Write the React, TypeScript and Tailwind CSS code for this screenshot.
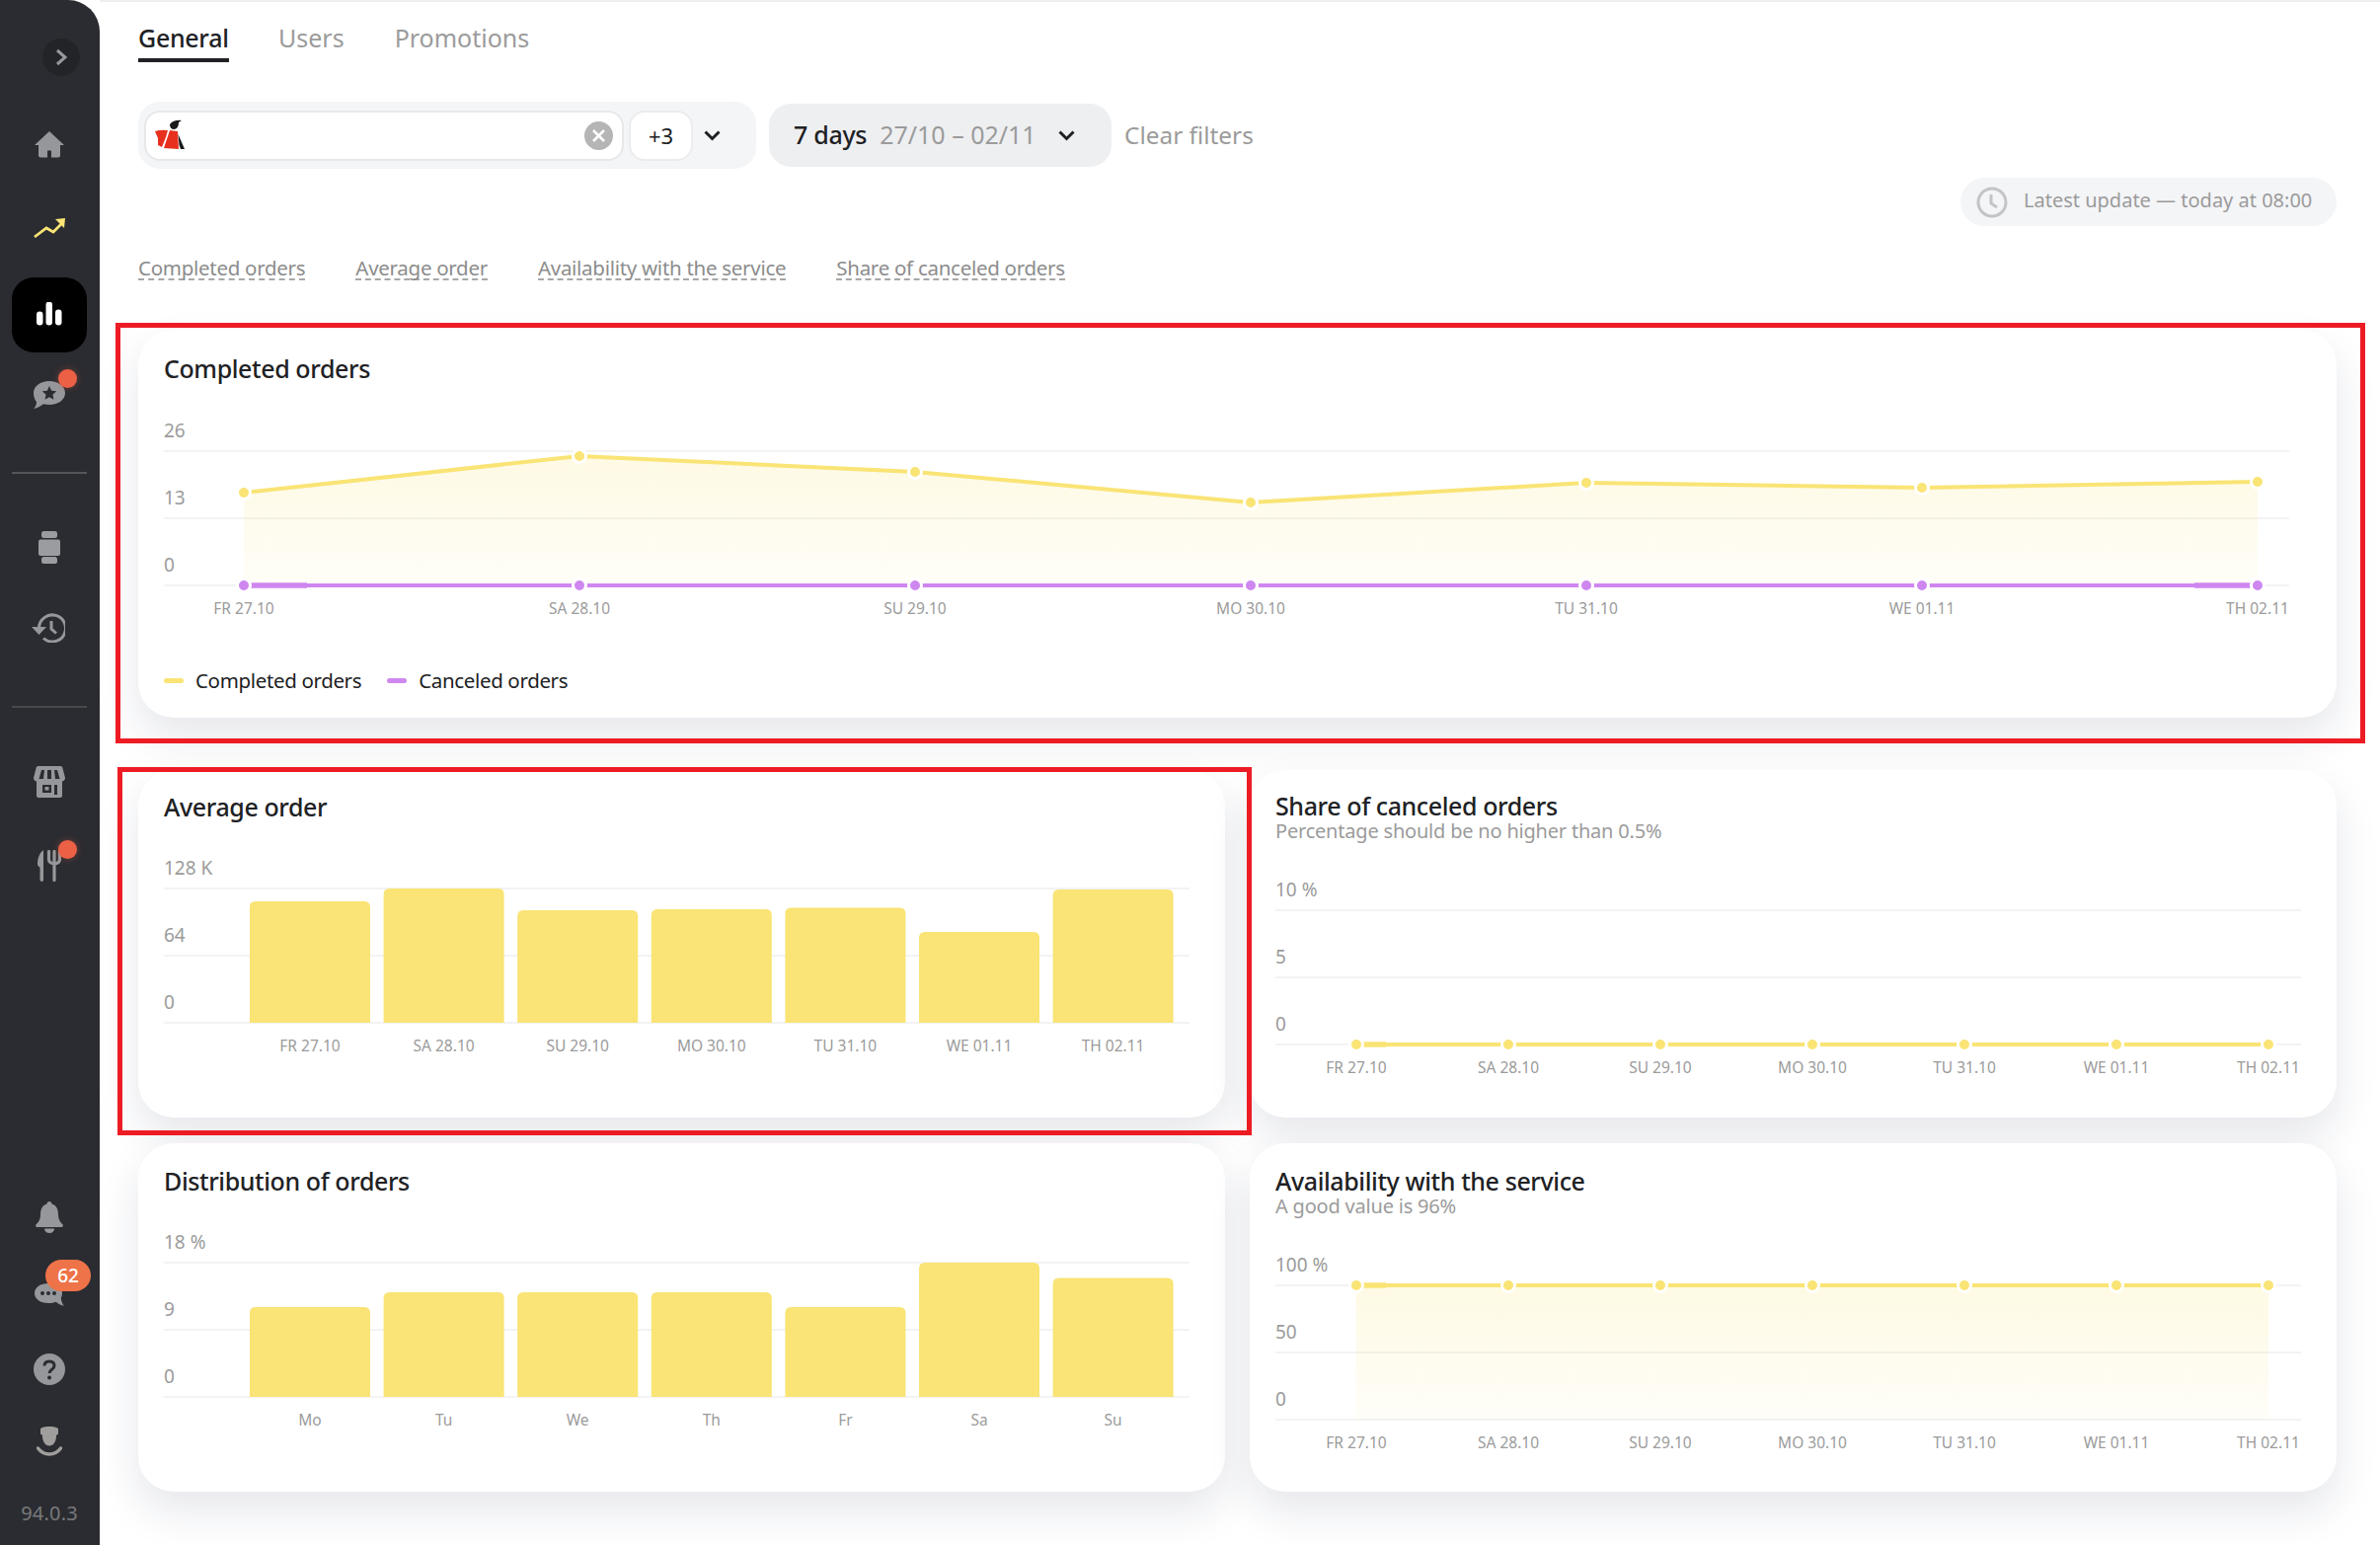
import React from "react";

const DAYS = ["FR 27.10", "SA 28.10", "SU 29.10", "MO 30.10", "TU 31.10", "WE 01.11", "TH 02.11"];
const WEEK = ["Mo", "Tu", "We", "Th", "Fr", "Sa", "Su"];
const YEL = "#f9e475";
const PUR = "#cf87f0";
const GRID = [68, 136, 204];

function Axis({ labels, w }: { labels: string[]; w: number }) {
  return (
    <>
      {GRID.map((y) => (
        <line key={y} x1={0} x2={w} y1={y} y2={y} stroke="#f3f3f4" strokeWidth={2} />
      ))}
      {labels.map((t, i) => (
        <text key={t} x={0} y={GRID[i] - 21} fontSize={19} dominantBaseline="central" className="fill-[#9b9b9b]">
          {t}
        </text>
      ))}
    </>
  );
}

function XLabels({ items, xs, y = 227 }: { items: string[]; xs: number[]; y?: number }) {
  return (
    <>
      {items.map((t, i) => (
        <text key={t} x={xs[i]} y={y} fontSize={15.5} textAnchor="middle" dominantBaseline="central" className="fill-[#9b9b9b]">
          {t}
        </text>
      ))}
    </>
  );
}

function Series({ xs, ys, color, thick, thickEnd = 0 }: { xs: number[]; ys: number[]; color: string; thick: number; thickEnd?: number }) {
  const pts = xs.map((x, i) => `${x},${ys[i]}`).join(" ");
  const n = xs.length - 1;
  const dy0 = (ys[1] - ys[0]) / (xs[1] - xs[0]);
  const dy1 = (ys[n] - ys[n - 1]) / (xs[n] - xs[n - 1]);
  return (
    <>
      <polyline points={pts} fill="none" stroke={color} strokeWidth={4} />
      {thick > 0 && <line x1={xs[0]} y1={ys[0]} x2={xs[0] + thick} y2={ys[0] + dy0 * thick} stroke={color} strokeWidth={5.5} />}
      {thickEnd > 0 && <line x1={xs[n] - thickEnd} y1={ys[n] - dy1 * thickEnd} x2={xs[n]} y2={ys[n]} stroke={color} strokeWidth={5.5} />}
      {xs.map((x, i) => (
        <circle key={x} cx={x} cy={ys[i]} r={6.5} fill={color} stroke="#fff" strokeWidth={3} />
      ))}
    </>
  );
}

function Area({ xs, ys, id }: { xs: number[]; ys: number[]; id: string }) {
  const d = `M${xs[0]},204 ` + xs.map((x, i) => `L${x},${ys[i]}`).join(" ") + ` L${xs[xs.length - 1]},204 Z`;
  return (
    <>
      <defs>
        <linearGradient id={id} x1="0" y1="0" x2="0" y2="1">
          <stop offset="0" stopColor={YEL} stopOpacity={0.2} />
          <stop offset="1" stopColor={YEL} stopOpacity={0.05} />
        </linearGradient>
      </defs>
      <path d={d} fill={`url(#${id})`} />
    </>
  );
}

function BarChart({ tops, items, labels }: { tops: number[]; items: string[]; labels: string[] }) {
  const xs = tops.map((_, i) => 87 + i * 135.6);
  return (
    <svg width={1048} height={240} className="block">
      <Axis labels={labels} w={1039} />
      {tops.map((t, i) => (
        <path
          key={i}
          d={`M${xs[i]},204 V${t + 6} Q${xs[i]},${t} ${xs[i] + 6},${t} H${xs[i] + 116} Q${xs[i] + 122},${t} ${xs[i] + 122},${t + 6} V204 Z`}
          fill="#f9e475"
        />
      ))}
      <XLabels items={items} xs={xs.map((x) => x + 61)} y={227} />
    </svg>
  );
}

function Title({ children, sub }: { children: React.ReactNode; sub?: string }) {
  return (
    <div className="flex flex-col">
      <div className={`${sub ? "h-[28px] leading-[28px]" : "h-[30px] leading-[30px]"} text-[25px] font-medium text-[#202124] tracking-[-0.4px] whitespace-nowrap`}>
        {children}
      </div>
      {sub && <div className="h-[24px] leading-[24px] text-[20px] text-[#9b9b9b] tracking-[-0.2px] whitespace-nowrap">{sub}</div>}
    </div>
  );
}

const I = "w-[40px] h-[40px] flex items-center justify-center relative shrink-0";
const G = "#96979a";

function Dot() {
  return <span className="absolute left-[29px] top-[-6px] w-[19px] h-[19px] rounded-full bg-[#ec6046] shadow-[0_0_6px_rgba(236,96,70,0.4)]" />;
}

function Sidebar() {
  return (
    <aside className="w-[101px] h-[1565px] shrink-0 rounded-tr-[32px] bg-[#2b2c31] flex flex-col items-center pr-[1px]">
      <button className="ml-[24px] mt-[39px] w-[38px] h-[38px] rounded-full bg-[#232427] flex items-center justify-center shrink-0">
        <svg width="16" height="20" viewBox="0 0 16 20" fill="none"><path d="M4 3l8 7-8 7" stroke="#97989b" strokeWidth="3" /></svg>
      </button>
      <div className={`${I} mt-[49px]`}>
        <svg width="30" height="28" viewBox="0 0 30 28"><path d="M15 1L0 15h4v10.500c0 1 1 2 2 2h7v-7h4v7h7c1 0 2-1 2-2V15h4z" fill={G} /></svg>
      </div>
      <div className={`${I} mt-[45px]`}>
        <svg width="32" height="22" viewBox="0 0 32 22" fill="none"><path d="M1 20L13 11l7 4L29 6" stroke="#f9e475" strokeWidth="2.800" /><path d="M22 2l10-1-1 10z" fill="#f9e475" /></svg>
      </div>
      <div className="mt-[30px] w-[76px] h-[76px] rounded-[22px] bg-black flex items-center justify-center shrink-0">
        <svg width="26" height="26" viewBox="0 0 26 26">
          <rect x="0" y="9.500" width="6.500" height="14" rx="3.200" fill="#fff" />
          <rect x="9.500" y="-0.500" width="6.500" height="24" rx="3.200" fill="#fff" />
          <rect x="19" y="7.500" width="6.500" height="16" rx="3.200" fill="#fff" />
        </svg>
      </div>
      <div className={`${I} mt-[23px]`}>
        <svg width="32" height="28" viewBox="0 0 32 28">
          <path d="M16 0c9 0 16 5 16 12s-7 12-16 12c-2 0-4-.2-6-.8C8 25 4 27 0 28c2-2 3-4 3-7C1 19 0 15.500 0 12 0 5 7 0 16 0z" fill={G} />
          <path d="M16 5l2.200 4.800 5 .5-3.800 3.400 1.100 5.100L16 16.200l-4.500 2.600 1.100-5.100-3.800-3.400 5-.5z" fill="#2b2c31" />
        </svg>
        <Dot />
      </div>
      <div className="mt-[58px] w-[76px] h-[2px] bg-[#55565a] shrink-0" />
      <div className={`${I} mt-[54px]`}>
        <svg width="22" height="33" viewBox="0 0 22 33">
          <rect x="3" y="0" width="16" height="7" rx="2.500" fill="#9b9c9f" />
          <rect x="0" y="8.500" width="22" height="16.500" rx="2" fill="#9b9c9f" />
          <rect x="3" y="26" width="16" height="7" rx="2.500" fill="#9b9c9f" />
        </svg>
      </div>
      <div className={`${I} mt-[42px]`}>
        <svg width="34" height="30" viewBox="0 0 34 30" fill="none" className="-ml-[3px]">
          <path d="M7.500 15A13.500 13.500 0 1 1 12 25.500" stroke={G} strokeWidth="3" />
          <path d="M0 14h15l-7.500 8z" fill={G} />
          <path d="M20 8v8l5 4.500" stroke={G} strokeWidth="3" />
        </svg>
      </div>
      <div className="mt-[59px] w-[76px] h-[2px] bg-[#48494d] shrink-0" />
      <div className={`${I} mt-[55px]`}>
        <svg width="32" height="32" viewBox="0 0 32 32">
          <path d="M5 0h22c1 0 2 .5 2.300 1.500L32 12c0 2-1 3-3 3.500V30c0 1-1 2-2 2H5c-1 0-2-1-2-2V15.500C1 15 0 14 0 12L2.700 1.500C3 .5 4 0 5 0z" fill={G} />
          <path d="M8 4h3l-1 9H5.500zM21 4h3l2.500 9H22zM14 4h4v9h-4z" fill="#2b2c31" />
          <path d="M9 19h9v8H9zM21 19h3v10h-3z" fill="#2b2c31" />
          <path d="M11.500 21h4v3.500h-4z" fill={G} />
        </svg>
      </div>
      <div className={`${I} mt-[45px]`}>
        <svg width="24" height="32" viewBox="0 0 24 32" fill="none">
          <path d="M6 0C2 3 0 8 0 14c0 2 1 3 2.500 3.500V30c0 1 1 2 2 2s1.500-1 1.500-2z" fill={G} />
          <path d="M11.500 1.500v8c0 3 2 4 5.500 4.500M22.500 1.500v8c0 3-2 4-5.500 4.500M17 1.500V30.500" stroke={G} strokeWidth="3.200" strokeLinecap="round" />
        </svg>
        <Dot />
      </div>
      <div className="flex-1" />
      <div className={I}>
        <svg width="28" height="32" viewBox="0 0 28 32">
          <path d="M14 0c1.500 0 2.500 1 2.500 2.500C22 4 23 9 23 14c0 4 2 7 5 10 0 1.500-1 2-2 2H2c-1 0-2-.5-2-2 3-3 5-6 5-10 0-5 1-10 6.500-11.500C11.500 1 12.500 0 14 0z" fill={G} />
          <path d="M9 27.500h10c0 2.500-2 4.500-5 4.500s-5-2-5-4.500z" fill={G} />
        </svg>
      </div>
      <div className={`${I} mt-[40px]`}>
        <svg width="30" height="26" viewBox="0 0 30 26">
          <path d="M14 0c8 0 14 4 14 10 0 1.800-.4 3.300-1.200 4.700.2 3 1 5 3 8-3.500-.5-6-2-8-3.900-2.300.8-5 1.200-7.800 1.200C6 20 0 16 0 10S6 0 14 0z" fill={G} />
          <circle cx="8" cy="10" r="2" fill="#2b2c31" />
          <circle cx="14" cy="10" r="2" fill="#2b2c31" />
          <circle cx="20" cy="10" r="2" fill="#2b2c31" />
        </svg>
        <span className="absolute left-[16px] top-[-17px] w-[46px] h-[32px] rounded-full bg-[#ee7348] flex items-center justify-center text-[19px] font-medium text-white">62</span>
      </div>
      <div className={`${I} mt-[34px]`}>
        <svg width="32" height="32" viewBox="0 0 32 32">
          <circle cx="16" cy="16" r="16" fill={G} />
          <path d="M11 12.500C11 9.500 13 8 16 8s5 1.700 5 4.500c0 4-5 3.500-5 7.500" fill="none" stroke="#2b2c31" strokeWidth="3" />
          <circle cx="16" cy="24.500" r="2" fill="#2b2c31" />
        </svg>
      </div>
      <div className={`${I} mt-[33px]`}>
        <svg width="26" height="30" viewBox="0 0 26 30" fill="none">
          <path d="M4 2.500c0-1 3-2.500 9-2.500s9 1.500 9 2.500v5c-1 .5-1.500 1-2 2 0 6-3 10-7 10s-7-4-7-10c-.5-1-1-1.500-2-2z" fill="#a09e9c" />
          <path d="M1.500 22c3 4 7 6 11.500 6s8.500-2 11.500-6" stroke="#a09e9c" strokeWidth="3.500" strokeLinecap="round" />
        </svg>
      </div>
      <div className="mt-[41px] mb-[20px] h-[24px] leading-[24px] text-[20px] text-[#78797c] tracking-[0.2px]">94.0.3</div>
    </aside>
  );
}

function Chev() {
  return (
    <svg width="17" height="11" viewBox="0 0 17 11" fill="none"><path d="M1.500 1.500l7 7 7-7" stroke="#1f2023" strokeWidth="3" /></svg>
  );
}

function Header() {
  return (
    <>
      <nav className="flex gap-[50px] h-[63px] shrink-0">
        <div className="w-[92px] h-[63px] border-b-[4px] border-[#202124] pt-[20px] text-[25px] leading-[36px] font-medium text-[#202124] tracking-[-0.3px] whitespace-nowrap">General</div>
        <div className="pt-[20px] text-[25px] leading-[36px] text-[#9b9b9b]">Users</div>
        <div className="pt-[20px] text-[25px] leading-[36px] text-[#9b9b9b] ml-[1px]">Promotions</div>
      </nav>
      <div className="flex items-center mt-[40px] h-[68px] shrink-0">
        <div className="w-[626px] h-[68px] rounded-[22px] bg-[#f4f5f7] flex items-center pl-[6px]">
          <div className="w-[486px] h-[51px] rounded-[16px] bg-white border-2 border-[#e8e8ea] flex items-center justify-between pl-[9px] pr-[9px]">
            <svg width="32" height="32" viewBox="0 0 32 32">
              <path d="M15 5Q19 0 27 1L24 3Q24 9 19.500 10 15 10 15 5z" fill="#1a1a1a" />
              <path d="M0 12Q6 10 13 11L11 18 7 28 3 26 3 19z" fill="#e8301f" />
              <path d="M15 11L23 12 24 30 9 29z" fill="#e8301f" />
              <path d="M23.500 15L30 30 26 30 24.500 26z" fill="#1a1a1a" />
            </svg>
            <svg width="29" height="29" viewBox="0 0 29 29">
              <circle cx="14.500" cy="14.500" r="14.500" fill="#b5b5b6" />
              <path d="M9 9l11 11M20 9L9 20" stroke="#fff" strokeWidth="2.500" />
            </svg>
          </div>
          <div className="ml-[5px] w-[65px] h-[51px] rounded-[16px] bg-white border-2 border-[#ececee] flex items-center justify-center text-[22px] text-[#202124]">+3</div>
          <div className="ml-[11px]"><Chev /></div>
        </div>
        <div className="ml-[13px] w-[347px] h-[64px] rounded-[22px] bg-[#eeeff1] flex items-center pl-[25px] text-[25px] whitespace-nowrap">
          <span className="font-medium text-[#202124] tracking-[-0.3px]">7 days</span>
          <span className="ml-[13px] text-[#9b9b9b]">27/10 – 02/11</span>
          <span className="ml-[22px]"><Chev /></span>
        </div>
        <span className="ml-[13px] text-[24.400px] text-[#9b9b9b] whitespace-nowrap">Clear filters</span>
      </div>
      <div className="self-end mt-[9px] w-[381px] h-[49px] rounded-full bg-[#f4f5f7] flex items-center shrink-0">
        <svg className="ml-[16px]" width="32" height="32" viewBox="0 0 32 32" fill="none">
          <circle cx="16" cy="16" r="14" stroke="#c4c4c6" strokeWidth="3" />
          <path d="M15 8v9l6 4" stroke="#c4c4c6" strokeWidth="3" />
        </svg>
        <span className="ml-[16px] pb-[3px] text-[20px] text-[#9b9b9b] whitespace-nowrap">Latest update — today at 08:00</span>
      </div>
      <div className="flex gap-[51px] mt-[31px] h-[24px] shrink-0">
        {["Completed orders", "Average order", "Availability with the service", "Share of canceled orders"].map((t) => (
          <span key={t} className="h-[24px] leading-[23px] border-b-2 border-dashed border-[#a8a8a8] text-[20.500px] text-[#8c8c8c] tracking-[-0.28px] whitespace-nowrap">{t}</span>
        ))}
      </div>
    </>
  );
}

const CARD = "rounded-[36px] bg-white shadow-[0_20px_44px_rgba(30,40,70,0.11)] px-[26px] overflow-hidden";

export default function App() {
  const x1 = DAYS.map((_, i) => 81 + i * 340);
  const x2 = DAYS.map((_, i) => 82 + i * 154);
  const y1 = [110, 73, 89, 120, 100, 105, 99];
  return (
    <div className="relative w-[2411px] h-[1565px] overflow-hidden bg-white flex font-['Noto_Sans',sans-serif]">
      <Sidebar />
      <main className="flex-1 min-w-0 flex flex-col pl-[39px] pr-[44px] border-t-2 border-[#eeeeee]">
        <div className="-mt-[2px] flex flex-col">
          <Header />
          <section className={`${CARD} mt-[50px] h-[393px] pt-[24px] shrink-0`}>
            <Title>Completed orders</Title>
            <svg width={2175} height={240} className="block mt-[1px]">
              <Axis labels={["26", "13", "0"]} w={2153} />
              <Area xs={x1} ys={y1} id="a1" />
              <Series xs={x1} ys={y1} color={YEL} thick={0} />
              <Series xs={x1} ys={x1.map(() => 204)} color={PUR} thick={64} thickEnd={64} />
              <XLabels items={DAYS} xs={x1} />
            </svg>
            <div className="flex items-center mt-[46px] h-[28px] text-[20.500px] text-[#202124] tracking-[-0.35px]">
              <span className="w-[20px] h-[5px] rounded-full bg-[#f9e475]" />
              <span className="ml-[12px]">Completed orders</span>
              <span className="ml-[26px] w-[20px] h-[5px] rounded-full bg-[#cf87f0]" />
              <span className="ml-[12px]">Canceled orders</span>
            </div>
          </section>
          <div className="grid grid-cols-[1101px_1101px] gap-x-[25px] gap-y-[26px] mt-[53px]">
            <section className={`${CARD} h-[352px] pt-[22px]`}>
              <Title>Average order</Title>
              <BarChart tops={[81, 68, 90, 89, 87.5, 112, 69]} items={DAYS} labels={["128 K", "64", "0"]} />
            </section>
            <section className={`${CARD} h-[352px] pt-[22px]`}>
              <Title sub="Percentage should be no higher than 0.5%">Share of canceled orders</Title>
              <svg width={1048} height={240} className="block">
                <Axis labels={["10 %", "5", "0"]} w={1039} />
                <Series xs={x2} ys={x2.map(() => 204)} color={YEL} thick={30} />
                <XLabels items={DAYS} xs={x2} />
              </svg>
            </section>
            <section className={`${CARD} h-[353px] pt-[23px]`}>
              <Title>Distribution of orders</Title>
              <BarChart tops={[113, 98, 98, 98, 113, 68, 83.5]} items={WEEK} labels={["18 %", "9", "0"]} />
            </section>
            <section className={`${CARD} h-[353px] pt-[24px]`}>
              <Title sub="A good value is 96%">Availability with the service</Title>
              <svg width={1048} height={240} className="block">
                <Axis labels={["100 %", "50", "0"]} w={1039} />
                <Area xs={x2} ys={x2.map(() => 68)} id="a2" />
                <Series xs={x2} ys={x2.map(() => 68)} color={YEL} thick={30} />
                <XLabels items={DAYS} xs={x2} />
              </svg>
            </section>
          </div>
        </div>
      </main>
      <div className="absolute left-[117px] top-[327px] w-[2279px] h-[426px] border-[5px] border-[#ed1c24] pointer-events-none" />
      <div className="absolute left-[119px] top-[777px] w-[1149px] h-[373px] border-[5px] border-[#ed1c24] pointer-events-none" />
    </div>
  );
}
